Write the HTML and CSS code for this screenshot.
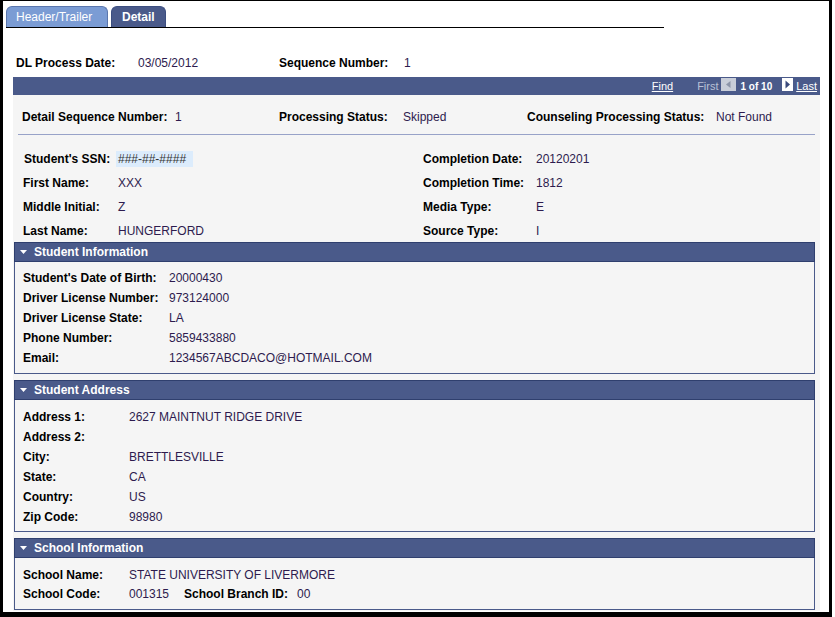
FILE: index.html
```html
<!DOCTYPE html>
<html>
<head>
<meta charset="utf-8">
<link rel="stylesheet" href="styles.css">
</head>
<body>
<div class="frame">
  <div class="tabs">
    <div class="tab tab-off">Header/Trailer</div>
    <div class="tab tab-on">Detail</div>
  </div>

  <div class="hdr-row">
    <span class="lbl w-dl">DL Process Date:</span>
    <span class="val w-dlv">03/05/2012</span>
    <span class="lbl w-seq">Sequence Number:</span>
    <span class="val">1</span>
  </div>

  <div class="navbar">
    <a class="nav-link nav-find">Find</a>
    <span class="nav-first">First</span>
    <svg class="nav-btn nav-prev" width="15" height="13" viewBox="0 0 15 13"><rect width="15" height="13" fill="#c9ced9"/><path d="M9.5 3 L5 6.5 L9.5 10 Z" fill="#8d95a9"/></svg>
    <span class="nav-count">1 of 10</span>
    <svg class="nav-btn nav-next" width="11" height="13" viewBox="0 0 11 13"><rect width="11" height="13" fill="#ffffff"/><path d="M3.5 2.5 L8 6.5 L3.5 10.5 Z" fill="#3a4a7c"/></svg>
    <a class="nav-link nav-last">Last</a>
  </div>

  <div class="grey">
    <div class="det-row">
      <span class="lbl w-ds">Detail Sequence Number:</span>
      <span class="val w-dsv">1</span>
      <span class="lbl w-ps">Processing Status:</span>
      <span class="val w-psv">Skipped</span>
      <span class="lbl w-cps">Counseling Processing Status:</span>
      <span class="val">Not Found</span>
    </div>
    <div class="rule"></div>

    <div class="top-grid">
      <div class="pair"><span class="lbl w-l1 ssn-lbl">Student's SSN:</span><span class="ssn">###-##-####</span></div>
      <div class="pair"><span class="lbl w-r1">Completion Date:</span><span class="val">20120201</span></div>
      <div class="pair"><span class="lbl w-l1">First Name:</span><span class="val">XXX</span></div>
      <div class="pair"><span class="lbl w-r1">Completion Time:</span><span class="val">1812</span></div>
      <div class="pair"><span class="lbl w-l1">Middle Initial:</span><span class="val">Z</span></div>
      <div class="pair"><span class="lbl w-r1">Media Type:</span><span class="val">E</span></div>
      <div class="pair"><span class="lbl w-l1">Last Name:</span><span class="val">HUNGERFORD</span></div>
      <div class="pair"><span class="lbl w-r1">Source Type:</span><span class="val">I</span></div>
    </div>

    <div class="panel">
      <div class="panel-hd"><svg class="tri" width="7" height="4" viewBox="0 0 7 4"><path d="M0 0 H7 L3.5 4 Z" fill="#fff"/></svg>Student Information</div>
      <div class="panel-bd bd-info">
        <div class="row"><span class="lbl w-info">Student's Date of Birth:</span><span class="val">20000430</span></div>
        <div class="row"><span class="lbl w-info">Driver License Number:</span><span class="val">973124000</span></div>
        <div class="row"><span class="lbl w-info">Driver License State:</span><span class="val">LA</span></div>
        <div class="row"><span class="lbl w-info">Phone Number:</span><span class="val">5859433880</span></div>
        <div class="row"><span class="lbl w-info">Email:</span><span class="val">1234567ABCDACO@HOTMAIL.COM</span></div>
      </div>
    </div>

    <div class="panel">
      <div class="panel-hd"><svg class="tri" width="7" height="4" viewBox="0 0 7 4"><path d="M0 0 H7 L3.5 4 Z" fill="#fff"/></svg>Student Address</div>
      <div class="panel-bd bd-addr">
        <div class="row"><span class="lbl w-addr">Address 1:</span><span class="val">2627 MAINTNUT RIDGE DRIVE</span></div>
        <div class="row"><span class="lbl w-addr">Address 2:</span><span class="val"></span></div>
        <div class="row"><span class="lbl w-addr">City:</span><span class="val">BRETTLESVILLE</span></div>
        <div class="row"><span class="lbl w-addr">State:</span><span class="val">CA</span></div>
        <div class="row"><span class="lbl w-addr">Country:</span><span class="val">US</span></div>
        <div class="row"><span class="lbl w-addr">Zip Code:</span><span class="val">98980</span></div>
      </div>
    </div>

    <div class="panel">
      <div class="panel-hd"><svg class="tri" width="7" height="4" viewBox="0 0 7 4"><path d="M0 0 H7 L3.5 4 Z" fill="#fff"/></svg>School Information</div>
      <div class="panel-bd bd-school">
        <div class="row row19"><span class="lbl w-addr">School Name:</span><span class="val">STATE UNIVERSITY OF LIVERMORE</span></div>
        <div class="row row19"><span class="lbl w-addr">School Code:</span><span class="val w-code">001315</span><span class="lbl w-br">School Branch ID:</span><span class="val">00</span></div>
      </div>
    </div>
  </div>
</div>
</body>
</html>
```

FILE: styles.css
```css
* { box-sizing: border-box; }
html, body { margin: 0; padding: 0; background: #fff; }
body {
  font-family: "Liberation Sans", Arial, sans-serif;
  font-size: 12px;
  color: #000;
}
.frame {
  width: 832px;
  height: 617px;
  border-top: 1px solid #000;
  border-left: 3px solid #000;
  border-right: 3px solid #000;
  border-bottom: 5px solid #000;
  background: #fff;
  overflow: hidden;
}
.lbl { font-weight: bold; color: #000; display: inline-block; white-space: nowrap; }
.val { color: #2d1b4e; display: inline-block; white-space: nowrap; }

/* tabs */
.tabs {
  display: flex;
  align-items: flex-end;
  gap: 3px;
  margin: 5px 0 0 3px;
  width: 658px;
  height: 22px;
  border-bottom: 1px solid #000;
}
.tab {
  height: 21px;
  border-radius: 6px 6px 0 0;
  color: #fff;
  font-size: 12px;
  line-height: 20px;
  padding: 0 9px;
  border: 1px solid #3c4e80;
  border-bottom: none;
}
.tab-off { width: 102px; background: #7b9cd4; border-color: #5a76ad; }
.tab-on { width: 55px; background: #4a5a8a; font-weight: bold; padding-left: 10px; }

/* header row */
.hdr-row {
  display: flex;
  margin: 28px 0 0 13px;
  line-height: 14px;
  height: 14px;
}
.w-dl { width: 122px; }
.w-dlv { width: 141px; }
.w-seq { width: 125px; }

/* nav bar */
.navbar {
  margin: 7px 0 0 10px;
  width: 807px;
  height: 18px;
  background: #4a5a8a;
  display: flex;
  align-items: center;
  justify-content: flex-end;
  padding-right: 3px;
  font-size: 11px;
  color: #fff;
}
.nav-link { color: #fff; text-decoration: underline; }
.nav-find { margin-right: 24px; }
.nav-first { color: #b9c0d6; margin-right: 2px; }
.nav-btn { display: block; margin-top: -4px; }
.nav-prev { margin-right: 5px; }
.nav-count { font-weight: bold; font-size: 10px; margin-right: 10px; }
.nav-last { margin-left: 3px; }

/* grey container */
.grey {
  margin-left: 10px;
  width: 807px;
  height: 516px;
  background: #f5f5f5;
  padding-top: 15px;
}
.det-row {
  display: flex;
  padding-left: 9px;
  line-height: 14px;
  height: 14px;
}
.w-ds { width: 153px; }
.w-dsv { width: 104px; }
.w-ps { width: 124px; }
.w-psv { width: 124px; }
.w-cps { width: 189px; }
.rule {
  margin: 10px 0 0 5px;
  width: 797px;
  height: 1px;
  background: #98a2c8;
}
.top-grid {
  display: grid;
  grid-template-columns: 400px 1fr;
  grid-template-rows: 25px 24px 24px 23px;
  padding-left: 10px;
  margin-top: 11px;
}
.pair { display: flex; align-items: center; }
.w-l1 { width: 95px; }
.ssn-lbl { width: 93px; padding-left: 1px; }
.w-r1 { width: 113px; }
.ssn {
  display: inline-block;
  background: #dcecfc;
  color: #333;
  padding: 0 2px;
  width: 77px;
  line-height: 16px;
}

/* panels */
.panel {
  margin-left: 1px;
  width: 801px;
  margin-bottom: 6px;
}
.panel-hd {
  height: 20px;
  background: #4a5a8a;
  border: 1px solid #2f3f6e;
  color: #fff;
  font-weight: bold;
  line-height: 18px;
  padding-left: 5px;
  display: flex;
  align-items: center;
}
.tri { margin-right: 7px; }
.panel-bd {
  border: 1px solid #4a5a8a;
  border-top: none;
  background: #f5f5f5;
  padding-left: 8px;
}
.row { display: flex; height: 20px; line-height: 20px; }
.row19 { height: 19px; line-height: 19px; }
.bd-info { padding-top: 6px; padding-bottom: 5px; }
.bd-addr { padding-top: 7px; padding-bottom: 4px; }
.bd-school { padding-top: 8px; padding-bottom: 5px; }
.w-info { width: 146px; }
.w-addr { width: 106px; }
.w-code { width: 55px; }
.w-br { width: 113px; }
```
